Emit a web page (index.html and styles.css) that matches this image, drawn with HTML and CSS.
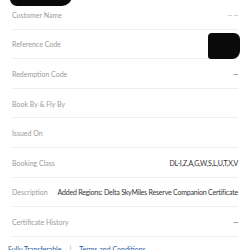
FILE: index.html
```html
<!DOCTYPE html>
<html lang="en">
<head>
    <meta charset="UTF-8">
    <meta name="viewport" content="width=device-width, initial-scale=1.0">
    <title>Certificate Details</title>
    <link rel="stylesheet" href="styles.css">
</head>
<body>
    <div class="scribble-top"></div>
    <div class="details">
        <div class="row">
            <span class="label">Customer Name</span>
            <span class="value muted">-- --</span>
        </div>
        <div class="row">
            <span class="label">Reference Code</span>
            <span class="redacted"></span>
        </div>
        <div class="row">
            <span class="label">Redemption Code</span>
            <span class="value">--</span>
        </div>
        <div class="row">
            <span class="label">Book By &amp; Fly By</span>
        </div>
        <div class="row">
            <span class="label">Issued On</span>
        </div>
        <div class="row">
            <span class="label">Booking Class</span>
            <span class="value">DL-I,Z,A,G,W,S,L,U,T,X,V</span>
        </div>
        <div class="row">
            <span class="label">Description</span>
            <span class="value">Added Regions: Delta SkyMiles Reserve Companion Certificate</span>
        </div>
        <div class="row">
            <span class="label">Certificate History</span>
            <span class="value">--</span>
        </div>
    </div>
    <div class="footer">
        <a class="link">Fully Transferable</a>
        <span class="divider">|</span>
        <a class="link">Terms and Conditions</a>
    </div>
</body>
</html>
```

FILE: styles.css
```css
* {
    margin: 0;
    padding: 0;
    box-sizing: border-box;
}

body {
    background-color: #ffffff;
    font-family: Lato, "Open Sans", sans-serif;
    font-size: 7px;
    color: #333333;
    position: relative;
}

.scribble-top {
    position: absolute;
    left: 10px;
    top: -4px;
    width: 62px;
    height: 10px;
    background-color: #0a0a0a;
    border-radius: 0 0 20px 14px;
}

.details {
    padding: 0 12px;
}

.row {
    height: 29.6px;
    display: flex;
    align-items: center;
    justify-content: space-between;
    border-bottom: 1px solid #eeeeee;
    padding-top: 1px;
}

.label {
    color: #9a9a9a;
    white-space: nowrap;
}

.value {
    color: #333333;
    letter-spacing: -0.2px;
    white-space: nowrap;
    text-align: right;
}

.muted {
    color: #777777;
    font-size: 6px;
    letter-spacing: 0;
}

.redacted {
    width: 32px;
    height: 26px;
    margin-top: 4px;
    margin-right: -2px;
    background-color: #0a0a0a;
    border-radius: 4px 6px 8px 3px;
}

.footer {
    display: flex;
    align-items: center;
    gap: 8px;
    padding: 8px 8px;
    color: #2a5d9f;
}

.link {
    color: #2a5d9f;
    white-space: nowrap;
}

.divider {
    color: #8899aa;
}
```
